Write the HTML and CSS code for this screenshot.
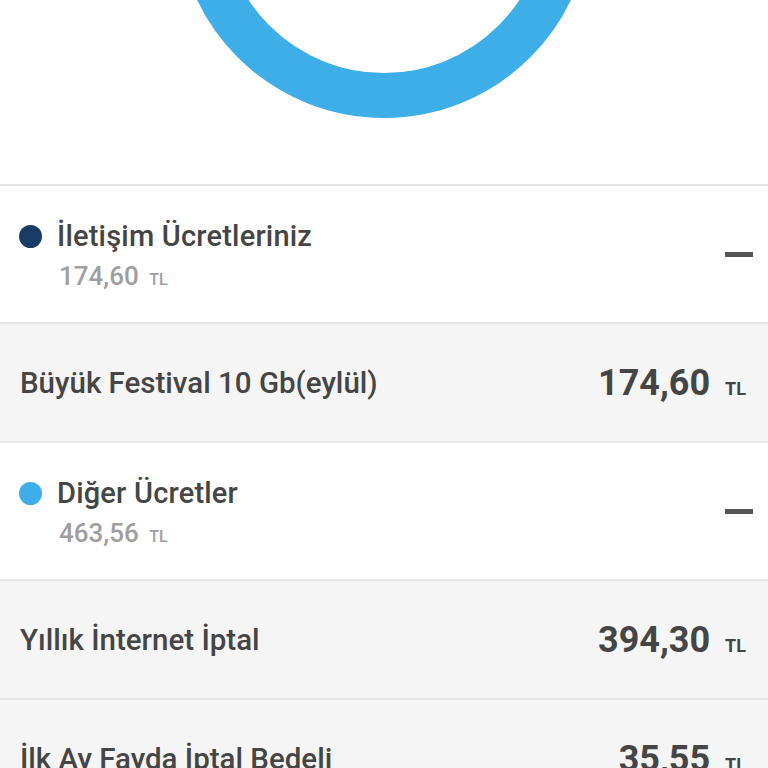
FILE: index.html
```html
<!DOCTYPE html>
<html lang="tr">
<head>
  <meta charset="UTF-8" />
  <meta name="viewport" content="width=device-width, initial-scale=1.0" />
  <title>Fatura Detayı</title>
  <link rel="stylesheet" href="styles.css">
</head>
<body>
  <div class="chart">
    <svg width="768" height="184" viewBox="0 0 768 184">
      <circle cx="384" cy="-89" r="184.5" fill="none" stroke="#3eaee8" stroke-width="45" />
    </svg>
  </div>
  <div class="group">
    <div class="group-info">
      <div class="group-title"><span class="dot dot-dark"></span>İletişim Ücretleriniz</div>
      <div class="group-sum">174,60 <span class="unit">TL</span></div>
    </div>
    <div class="collapse"></div>
  </div>
  <div class="row">
    <div class="row-name">Büyük Festival 10 Gb(eylül)</div>
    <div class="row-amount">174,60 <span class="unit">TL</span></div>
  </div>
  <div class="group">
    <div class="group-info">
      <div class="group-title"><span class="dot dot-light"></span>Diğer Ücretler</div>
      <div class="group-sum">463,56 <span class="unit">TL</span></div>
    </div>
    <div class="collapse"></div>
  </div>
  <div class="row">
    <div class="row-name">Yıllık İnternet İptal</div>
    <div class="row-amount">394,30 <span class="unit">TL</span></div>
  </div>
  <div class="row">
    <div class="row-name">İlk Ay Fayda İptal Bedeli</div>
    <div class="row-amount">35,55 <span class="unit">TL</span></div>
  </div>
</body>
</html>
```

FILE: styles.css
```css
body {
  margin: 0;
  font-family: Roboto, "Noto Sans", sans-serif;
  background-color: #f5f5f5;
  color: #454545;
  overflow: hidden;
}

.chart {
  height: 184px;
  background-color: #fff;
}

.chart svg {
  display: block;
}

.group {
  display: flex;
  align-items: center;
  justify-content: space-between;
  height: 136px;
  background-color: #fff;
  border-top: 2px solid #e6e6e6;
  padding: 0 15px 0 20px;
}

.group-info {
  display: flex;
  flex-direction: column;
  padding-top: 8px;
}

.group-title {
  display: flex;
  align-items: center;
  font-size: 29px;
  font-weight: 500;
  line-height: 40px;
  letter-spacing: 0.2px;
  margin-left: -1px;
}

.dot {
  width: 23px;
  height: 23px;
  border-radius: 50%;
  margin-right: 15px;
}

.dot-dark {
  background-color: #183c66;
}

.dot-light {
  background-color: #3eaee8;
}

.group-sum {
  font-size: 26px;
  font-weight: 500;
  line-height: 40px;
  color: #9e9e9e;
  padding-left: 39px;
}

.group-sum .unit {
  font-size: 16px;
  margin-left: 4px;
}

.collapse {
  width: 28px;
  height: 5px;
  background-color: #555;
}

.row {
  display: flex;
  align-items: center;
  justify-content: space-between;
  height: 117px;
  border-top: 2px solid #e6e6e6;
  padding: 0 20px;
}

.row-name {
  font-size: 29.5px;
  font-weight: 500;
}

.row-amount {
  font-size: 36px;
  font-weight: 700;
  margin-right: 2px;
}

.row-amount .unit {
  font-size: 18px;
  margin-left: 6px;
}
```
